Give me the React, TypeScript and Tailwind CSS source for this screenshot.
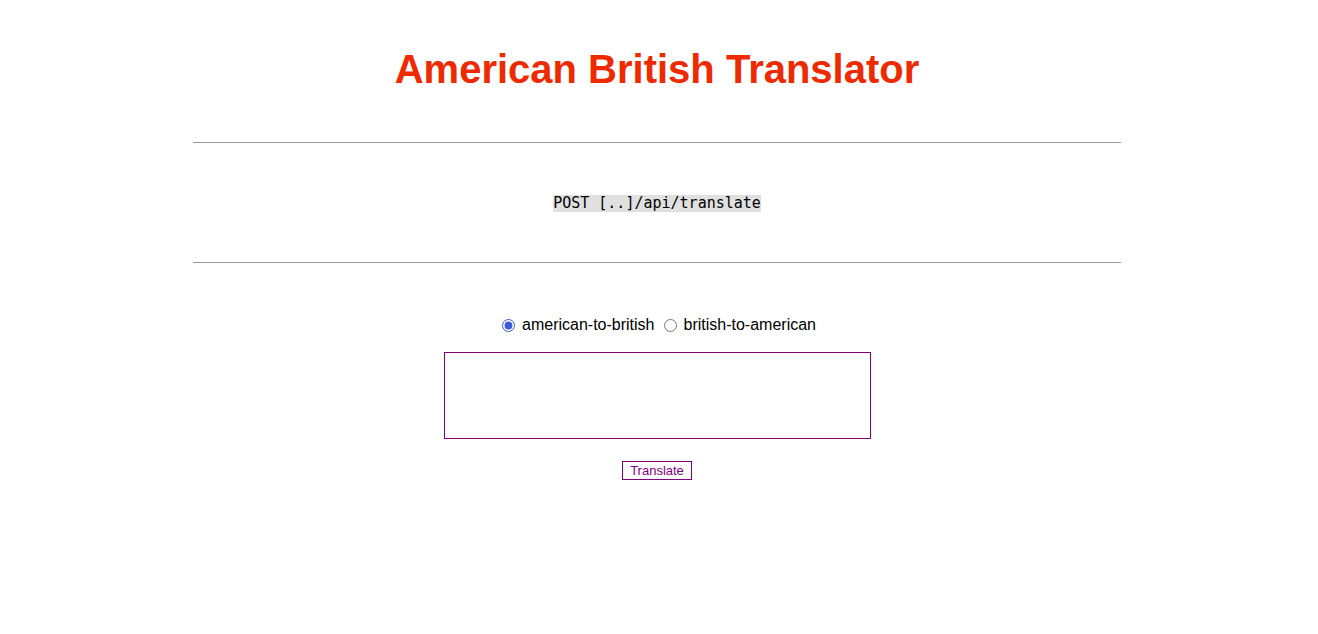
import { useState } from 'react'

export default function App() {
  const [dir, setDir] = useState('american-to-british')
  const [text, setText] = useState('')

  return (
    <main className="min-h-screen bg-white text-black pr-[4px]" style={{ fontFamily: '"Liberation Sans", Arial, sans-serif' }}>
      <h1 className="pt-[44px] text-center text-[40px] leading-[50px] font-bold text-[#ee2a00]">
        American British Translator
      </h1>
      <hr className="mx-auto mt-[48px] w-[928px] border-t border-[#999]" />
      <div className="pt-[52px] pb-[50px] text-center leading-[17px]">
        <code className="bg-[#e0e0e0] text-[15px] leading-[17px] inline-block align-top" style={{ fontFamily: '"DejaVu Sans Mono", monospace' }}>
          POST [..]/api/translate
        </code>
      </div>
      <hr className="mx-auto w-[928px] border-t border-[#999]" />
      <div className="mt-[50px] flex flex-col items-center">
        <div className="flex items-center text-base">
          <label className="flex items-center">
            <input
              type="radio"
              name="dir"
              checked={dir === 'american-to-british'}
              onChange={() => setDir('american-to-british')}
              className="m-[0_7px_0_4px] w-[13px] h-[13px] accent-[#3b5bdb]"
            />
            american-to-british
          </label>
          <label className="flex items-center ml-[4px]">
            <input
              type="radio"
              name="dir"
              checked={dir === 'british-to-american'}
              onChange={() => setDir('british-to-american')}
              className="m-[0_7px_0_5px] w-[13px] h-[13px]"
            />
            british-to-american
          </label>
        </div>
        <textarea
          value={text}
          onChange={(e) => setText(e.target.value)}
          className="mt-[15px] w-[427px] h-[87px] border border-[#800080] resize-none outline-none"
        />
        <button className="mt-[22px] h-[19px] px-[7px] border border-[#800080] text-[13px] leading-[15px] text-[#800080]">
          Translate
        </button>
      </div>
    </main>
  )
}
